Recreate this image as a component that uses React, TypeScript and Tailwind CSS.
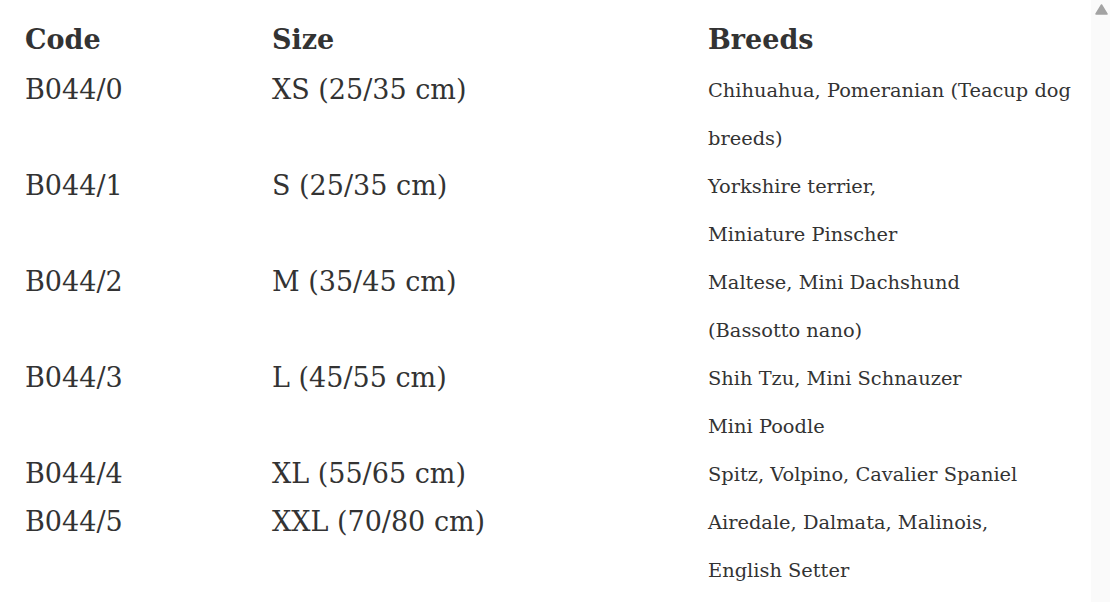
const rows = [
  { code: "B044/0", size: "XS (25/35 cm)", breeds: ["Chihuahua, Pomeranian (Teacup dog", "breeds)"] },
  { code: "B044/1", size: "S (25/35 cm)", breeds: ["Yorkshire terrier,", "Miniature Pinscher"] },
  { code: "B044/2", size: "M (35/45 cm)", breeds: ["Maltese, Mini Dachshund", "(Bassotto nano)"] },
  { code: "B044/3", size: "L (45/55 cm)", breeds: ["Shih Tzu, Mini Schnauzer", "Mini Poodle"] },
  { code: "B044/4", size: "XL (55/65 cm)", breeds: ["Spitz, Volpino, Cavalier Spaniel"] },
  { code: "B044/5", size: "XXL (70/80 cm)", breeds: ["Airedale, Dalmata, Malinois,", "English Setter"] },
];

export default function App() {
  return (
    <div className="flex h-[602px] w-[1110px] overflow-hidden bg-white text-[#333333] [font-family:'DejaVu_Serif',serif]">
      <div className="flex-1 pl-[25px] pt-[18px]">
        <div className="grid grid-cols-[247px_436px_1fr] pb-[5px] text-[27px] font-bold leading-[44px]">
          <div>Code</div>
          <div>Size</div>
          <div>Breeds</div>
        </div>

        {rows.map((row) => (
          <div
            key={row.code}
            className="grid grid-cols-[247px_436px_1fr] items-start"
          >
            <div className="text-[27px] leading-[45px]">{row.code}</div>
            <div className="text-[27px] leading-[45px]">{row.size}</div>
            <div className="text-[19.4px] leading-[48px]">
              {row.breeds.map((line) => (
                <div key={line} className="whitespace-nowrap">
                  {line}
                </div>
              ))}
            </div>
          </div>
        ))}
      </div>

      <div className="w-[19px] shrink-0 bg-[#fafafa] pt-[4px] pl-[4px]">
        <svg width="13" height="11" viewBox="0 0 13 11">
          <path
            d="M6.5 1 L12 10 L1 10 Z"
            fill="#a3a3a3"
            stroke="#a3a3a3"
            strokeWidth="1.5"
            strokeLinejoin="round"
          />
        </svg>
      </div>
    </div>
  );
}
